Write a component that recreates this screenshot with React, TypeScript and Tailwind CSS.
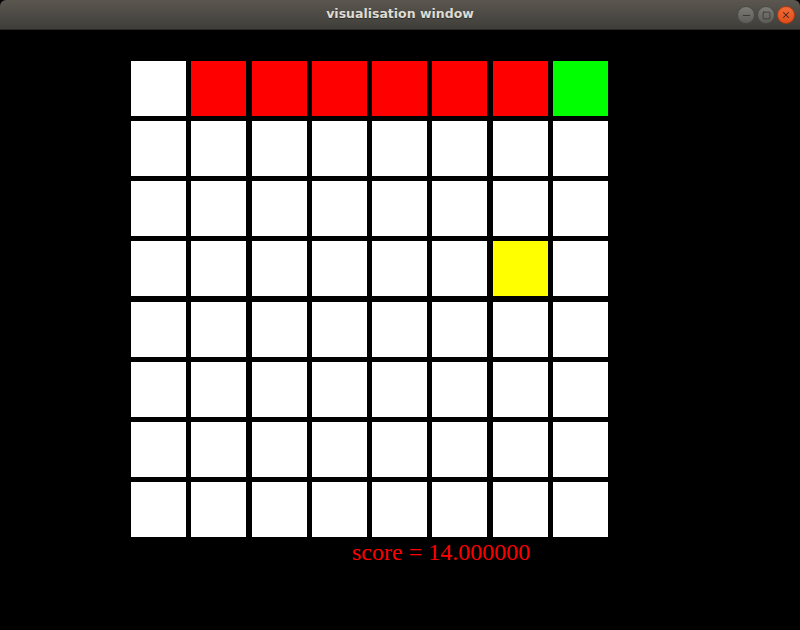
import { X, Minus, Square } from "lucide-react";

const ROWS = 8;
const COLS = 8;

function cellColor(r: number, c: number) {
  if (r === 0 && c === 7) return "bg-[#00ff00]";
  if (r === 0 && c > 0) return "bg-[#ff0000]";
  if (r === 3 && c === 6) return "bg-[#ffff00]";
  return "bg-white";
}

export default function App() {
  const cells = [];
  for (let r = 0; r < ROWS; r++) {
    for (let c = 0; c < COLS; c++) {
      cells.push(<div key={`${r}-${c}`} className={cellColor(r, c)} />);
    }
  }

  return (
    <div className="w-[800px] h-[630px] bg-black flex flex-col overflow-hidden">
      {/* title bar */}
      <div className="relative h-[30px] shrink-0 rounded-t-[6px] bg-gradient-to-b from-[#5b5750] to-[#3f3e3a] border-b border-[#2a2926] flex items-center justify-center">
        <span className="font-['DejaVu_Sans',sans-serif] font-bold text-[12.5px] text-[#dfdbd2] [text-shadow:0_1px_0_#2d2c29]">
          visualisation window
        </span>
        <div className="absolute right-[5px] top-[6px] flex gap-[2px]">
          <div className="w-[18px] h-[18px] rounded-full bg-gradient-to-b from-[#7d7b76] to-[#5e5c58] border border-[#4a4844] flex items-center justify-center">
            <Minus size={11} strokeWidth={2} className="text-[#36352f]" />
          </div>
          <div className="w-[18px] h-[18px] rounded-full bg-gradient-to-b from-[#7d7b76] to-[#5e5c58] border border-[#4a4844] flex items-center justify-center">
            <Square size={9} strokeWidth={2.2} className="text-[#36352f]" />
          </div>
          <div className="w-[18px] h-[18px] rounded-full bg-gradient-to-b from-[#f26a35] to-[#df4e1b] border border-[#b23a10] flex items-center justify-center">
            <X size={10} strokeWidth={2.5} className="text-[#3c2a20]" />
          </div>
        </div>
      </div>

      {/* board */}
      <div className="pl-[131px] pt-[31px]">
        <div className="grid grid-cols-8 grid-rows-8 gap-[5.3px] w-[477px] h-[476px]">
          {cells}
        </div>
        <div className="ml-[221px] mt-[3px] font-['Liberation_Serif',serif] text-[24px] leading-[24px] text-[#ff0000]">
          score = 14.000000
        </div>
      </div>
    </div>
  );
}
